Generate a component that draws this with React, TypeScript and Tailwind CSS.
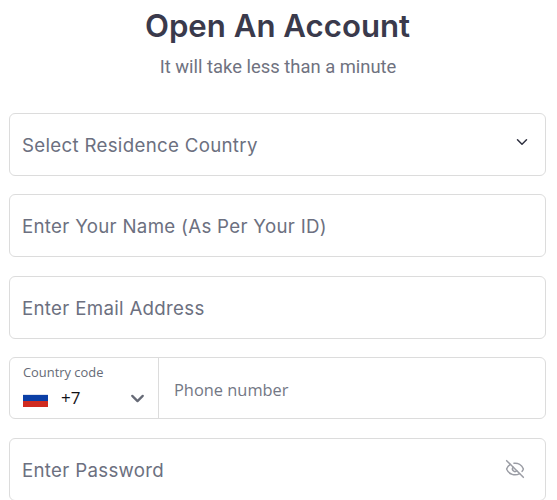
import { ChevronDown, EyeOff } from "lucide-react"

function Field({ label, children }: { label: string; children?: React.ReactNode }) {
  return (
    <div className="flex h-[63px] items-center justify-between rounded-[6px] border border-[#dcdcdc] bg-white pl-3 pr-[14px]">
      <span className="pt-[3px] font-['Inter',sans-serif] text-[18.7px] tracking-[0.3px] text-[#6c7080]">{label}</span>
      {children}
    </div>
  )
}

export default function App() {
  return (
    <div className="h-[500px] w-[557px] overflow-hidden bg-white pl-[9px] pr-[11px]">
      <div className="text-center">
        <h1 className="mt-[6px] font-['Inter',sans-serif] text-[31.2px] font-semibold leading-[40px] text-[#3a3a4c]">Open An Account</h1>
        <p className="ml-[1px] mt-[1px] font-['Roboto',sans-serif] text-[18.4px] leading-[40px] text-[#6f7280]">It will take less than a minute</p>
      </div>
      <div className="mt-[26px] flex flex-col gap-[18.4px]">
        <Field label="Select Residence Country">
          <ChevronDown className="-mt-[6px] h-[18px] w-[18px] text-[#2f3140]" strokeWidth={2} />
        </Field>
        <Field label="Enter Your Name (As Per Your ID)" />
        <Field label="Enter Email Address" />
        <div className="flex h-[62px] rounded-[6px] border border-[#dcdcdc] bg-white">
          <div className="flex w-[149px] shrink-0 flex-col border-r border-[#dcdcdc] pl-[13px] pr-[10px] pt-[5px]">
            <span className="font-['Open_Sans',sans-serif] text-[12.9px] leading-[18px] text-[#666a76]">Country code</span>
            <div className="mt-[5px] flex items-center">
              <div className="mt-[4px] flex h-[13px] w-[25px] flex-col">
                <div className="h-[1px] bg-[#dfe3ee]" />
                <div className="h-[6px] bg-[#0b3fa6]" />
                <div className="h-[6px] bg-[#d02b20]" />
              </div>
              <span className="ml-[13px] font-['Open_Sans',sans-serif] text-[17px] leading-[24px] text-[#111116]">+7</span>
              <ChevronDown className="ml-auto h-[21px] w-[21px] text-[#666a76]" strokeWidth={2.6} />
            </div>
          </div>
          <div className="flex flex-1 items-center pl-[15px] pt-[5px] font-['Open_Sans',sans-serif] text-[16.4px] text-[#737785]">Phone number</div>
        </div>
        <Field label="Enter Password">
          <EyeOff className="mr-[6px] h-[20px] w-[20px] text-[#9a9ca4]" strokeWidth={1.8} />
        </Field>
      </div>
    </div>
  )
}
